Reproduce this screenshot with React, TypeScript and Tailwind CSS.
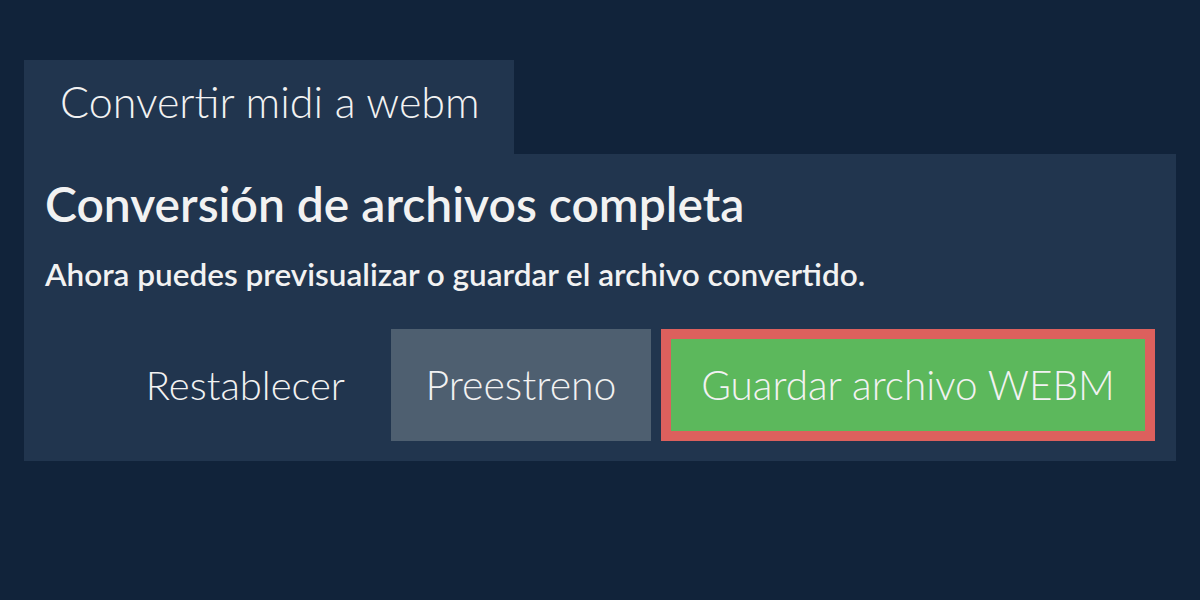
export default function App() {
  return (
    <div
      className="min-h-[600px] w-full bg-[#11233a] pt-[60px] px-[24px] text-[#f2f2f2]"
      style={{ fontFamily: 'Lato, "Open Sans", sans-serif' }}
    >
      {/* Tab */}
      <div className="inline-flex h-[94px] items-center bg-[#21354e] pb-[12px] pl-[36px] pr-[34px]">
        <span className="text-[43px] font-light leading-none">Convertir midi a webm</span>
      </div>

      {/* Panel */}
      <div className="bg-[#21354e] px-[21px] pt-[22px] pb-[20px]">
        <h1 className="text-[48px] font-semibold leading-[56px]">Conversión de archivos completa</h1>
        <p className="mt-[24px] text-[31.5px] font-semibold leading-[36px]">
          Ahora puedes previsualizar o guardar el archivo convertido.
        </p>

        <div className="mt-[37px] flex items-center justify-end gap-[10px]">
          <button className="h-[112px] px-[36px] text-[40px] font-light">Restablecer</button>
          <button className="h-[112px] w-[260px] bg-[#4e5f70] text-[41px] font-light">Preestreno</button>
          <button className="h-[112px] w-[494px] border-[10px] border-[#dc605d] bg-[#5cb85c] text-[40.5px] font-light">
            Guardar archivo WEBM
          </button>
        </div>
      </div>
    </div>
  );
}
